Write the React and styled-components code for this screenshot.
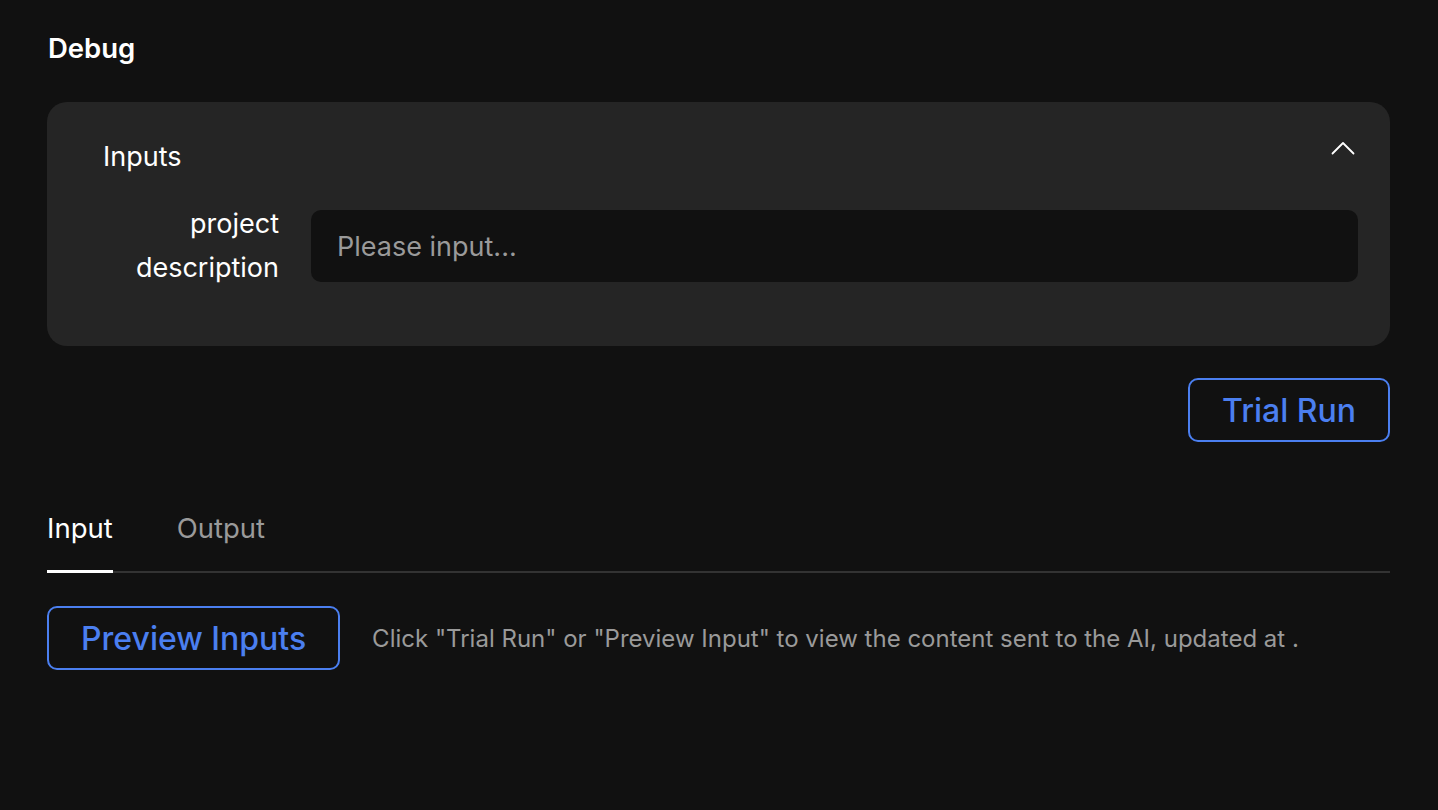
import React, { useState } from 'react';
import styled, { createGlobalStyle } from 'styled-components';

const GlobalStyle = createGlobalStyle`
  html, body {
    margin: 0;
    padding: 0;
    background: #111111;
  }
  body {
    font-family: Inter, "Noto Sans", sans-serif;
    color: #fff;
  }
`;

const Page = styled.div`
  width: 1438px;
  height: 810px;
  box-sizing: border-box;
  padding: 30px 48px 0 47px;
  background: #111111;
`;

const Title = styled.h1`
  margin: 0 0 0 1px;
  font-size: 27.5px;
  line-height: 36px;
  font-weight: 600;
  color: #fff;
`;

const Card = styled.section`
  margin-top: 36px;
  background: #252525;
  border-radius: 20px;
  padding: 37px 35px 56px 56px;
`;

const CardHeader = styled.div`
  display: flex;
  justify-content: space-between;
  align-items: center;
  height: 36px;
`;

const CardTitle = styled.div`
  font-size: 27px;
  line-height: 36px;
  color: #fff;
`;

const Toggle = styled.button`
  background: none;
  border: none;
  padding: 0;
  margin-top: -18px;
  display: flex;
  cursor: pointer;
`;

const FieldRow = styled.div`
  display: flex;
  align-items: center;
  gap: 32px;
  margin-top: 27px;
  margin-right: -3px;
`;

const Label = styled.label`
  width: 176px;
  text-align: right;
  font-size: 27px;
  line-height: 44px;
  color: #fff;
`;

const Input = styled.input`
  flex: 1;
  height: 72px;
  box-sizing: border-box;
  background: #111111;
  border: none;
  border-radius: 10px;
  padding: 0 26px;
  font-family: inherit;
  font-size: 27px;
  color: #fff;
  outline: none;

  &::placeholder {
    color: #9a9a9a;
  }
`;

const Actions = styled.div`
  display: flex;
  justify-content: flex-end;
  margin-top: 32px;
`;

const OutlineButton = styled.button`
  height: 64px;
  box-sizing: border-box;
  padding: 0 ${({ $pad }) => $pad}px;
  background: transparent;
  border: 2px solid #4b7ff0;
  border-radius: 10px;
  color: #4b7ff0;
  font-family: inherit;
  font-size: 32px;
  font-weight: 500;
  cursor: pointer;
`;

const Tabs = styled.div`
  display: flex;
  gap: 64px;
  margin-top: 58px;
  border-bottom: 2px solid #333333;
`;

const Tab = styled.div`
  font-size: 27.5px;
  line-height: 36px;
  padding: 10px 0 24px;
  margin-bottom: -2px;
  color: ${({ $active }) => ($active ? '#ffffff' : '#9a9a9a')};
  border-bottom: 3px solid ${({ $active }) => ($active ? '#ffffff' : 'transparent')};
  cursor: pointer;
`;

const PreviewRow = styled.div`
  display: flex;
  align-items: center;
  gap: 32px;
  margin-top: 33px;
`;

const Hint = styled.span`
  font-size: 24px;
  color: #9a9a9a;
`;

const ChevronUp = () => (
  <svg width="24" height="14" viewBox="0 0 24 14" fill="none">
    <path d="M1.5 12.5 L12 2 L22.5 12.5" stroke="#ffffff" strokeWidth="1.8" strokeLinecap="round" strokeLinejoin="round" />
  </svg>
);

const App = () => {
  const [tab, setTab] = useState('input');

  return (
    <Page>
      <GlobalStyle />
      <Title>Debug</Title>
      <Card>
        <CardHeader>
          <CardTitle>Inputs</CardTitle>
          <Toggle aria-label="collapse"><ChevronUp /></Toggle>
        </CardHeader>
        <FieldRow>
          <Label>project description</Label>
          <Input placeholder="Please input..." />
        </FieldRow>
      </Card>
      <Actions>
        <OutlineButton $pad={32}>Trial Run</OutlineButton>
      </Actions>
      <Tabs>
        <Tab $active={tab === 'input'} onClick={() => setTab('input')}>Input</Tab>
        <Tab $active={tab === 'output'} onClick={() => setTab('output')}>Output</Tab>
      </Tabs>
      <PreviewRow>
        <OutlineButton $pad={32}>Preview Inputs</OutlineButton>
        <Hint>Click "Trial Run" or "Preview Input" to view the content sent to the AI, updated at .</Hint>
      </PreviewRow>
    </Page>
  );
};

export default App;
